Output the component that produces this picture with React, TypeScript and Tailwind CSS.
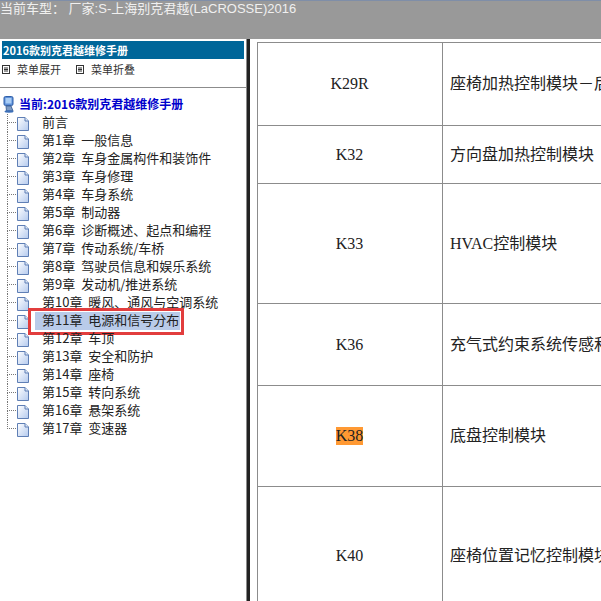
const cjk = { fontFamily: '"Noto Sans CJK SC", sans-serif' };
const mixed = { fontFamily: '"Liberation Sans", "Noto Sans CJK SC", sans-serif' };
const cell = { fontFamily: '"Liberation Serif", "Noto Sans CJK SC", serif' };

const chapters = [
  "前言",
  "第1章 一般信息",
  "第2章 车身金属构件和装饰件",
  "第3章 车身修理",
  "第4章 车身系统",
  "第5章 制动器",
  "第6章 诊断概述、起点和编程",
  "第7章 传动系统/车桥",
  "第8章 驾驶员信息和娱乐系统",
  "第9章 发动机/推进系统",
  "第10章 暖风、通风与空调系统",
  "第11章 电源和信号分布",
  "第12章 车顶",
  "第13章 安全和防护",
  "第14章 座椅",
  "第15章 转向系统",
  "第16章 悬架系统",
  "第17章 变速器",
];

const rows = [
  { code: "K29R", name: "座椅加热控制模块－后", h: "h-[83px]" },
  { code: "K32", name: "方向盘加热控制模块", h: "h-[58px]" },
  { code: "K33", name: "HVAC控制模块", h: "h-[120px]" },
  { code: "K36", name: "充气式约束系统传感和诊断模块", h: "h-[82px]" },
  { code: "K38", name: "底盘控制模块", h: "h-[101px]", hit: true },
  { code: "K40", name: "座椅位置记忆控制模块", h: "h-[138px]" },
];

const DocIcon = () => (
  <svg width="14" height="18" viewBox="0 0 14 18" className="shrink-0">
    <defs>
      <linearGradient id="doc" x1="0" y1="0" x2="1" y2="1">
        <stop offset="0" stopColor="#ffffff" />
        <stop offset="1" stopColor="#b4caee" />
      </linearGradient>
    </defs>
    <path d="M1.5 3.5H9L12.5 7V16.5H1.5Z" fill="url(#doc)" stroke="#5f7fb5" />
    <path d="M9 3.5V7H12.5" fill="#dfe9f8" stroke="#5f7fb5" />
  </svg>
);

const ComputerIcon = () => (
  <svg width="13" height="17" viewBox="0 0 13 17" className="shrink-0">
    <rect x="2" y="0.5" width="9" height="9" rx="1.5" fill="#5d8fd8" stroke="#2f5fa8" />
    <rect x="3.5" y="2" width="6" height="5.5" fill="#a9cdf5" />
    <path d="M4 10H9L11 15H4.5Z" fill="#7f9cc4" stroke="#47699c" />
    <ellipse cx="7" cy="15.5" rx="4.5" ry="1.2" fill="#3c6fb8" />
  </svg>
);

const MenuIcon = () => (
  <svg width="8" height="9" viewBox="0 0 8 9" className="shrink-0">
    <rect x="0.5" y="0.5" width="7" height="8" fill="#fff" stroke="#333" />
    <path d="M2 3H6M2 4.5H6M2 6H6" stroke="#333" />
  </svg>
);

export default function App() {
  return (
    <div className="w-[601px] h-[601px] overflow-hidden bg-white flex flex-col">
      <div
        className="h-[39px] shrink-0 bg-[#999999] border-t border-[#7f8ea8] text-[13px] leading-[16px] text-[#f0f0f0] whitespace-pre"
        style={mixed}
      >
        当前车型： 厂家:S-上海别克君越(LaCROSSE)2016
      </div>

      <div className="flex flex-1 min-h-0">
        <div className="w-[246px] shrink-0 flex flex-col">
          <div className="h-[49px] shrink-0 border-b border-[#8c8c8c] pt-[2px]">
            <div
              className="mx-[2px] h-[18px] bg-[#006699] text-white text-[11px] font-bold leading-[18px] pl-[1px]"
              style={cjk}
            >
              2016款别克君越维修手册
            </div>
            <div className="flex items-center h-[20px] pl-[2px] text-[11px] text-[#333]" style={cjk}>
              <MenuIcon />
              <span className="ml-[7px] w-[59px]">菜单展开</span>
              <MenuIcon />
              <span className="ml-[7px]">菜单折叠</span>
            </div>
          </div>

          <div className="flex items-center h-[20px] pl-[2px] mt-[6px] gap-[4px] shrink-0">
            <ComputerIcon />
            <span className="text-[12px] font-bold text-[#0000cc]" style={cjk}>
              当前:2016款别克君越维修手册
            </span>
          </div>

          <ul>
            {chapters.map((title, i) => {
              const selected = title.startsWith("第11章");
              const last = i === chapters.length - 1;
              return (
                <li
                  key={title}
                  className="relative flex items-center h-[18px] pl-[7px] text-[13px] text-[#222] [word-spacing:3px]"
                  style={cjk}
                >
                  {selected && (
                    <div className="absolute left-[28px] top-[-4px] w-[156px] h-[27px] border-[3px] border-[#e23d3d] bg-white" />
                  )}
                  <div className="w-[9px] h-full flex flex-col shrink-0">
                    <div className="h-[9px] border-l border-b border-dotted border-[#777]" />
                    {!last && <div className="h-[9px] border-l border-dotted border-[#777]" />}
                  </div>
                  <DocIcon />
                  <span
                    className={
                      selected
                        ? "relative ml-[5px] pl-[7px] pr-[1px] h-[18px] leading-[16px] bg-[#b9cbe9] whitespace-nowrap"
                        : "ml-[12px] h-[18px] leading-[16px] whitespace-nowrap"
                    }
                  >
                    {title}
                  </span>
                </li>
              );
            })}
          </ul>
        </div>

        <div className="w-[1px] shrink-0 bg-[#8c8c8c]" />
        <div className="w-[3px] shrink-0 bg-[#222222]" />

        <div className="flex-1 min-w-0 overflow-hidden pl-[7px] pt-[3px]">
          <div className="w-[500px] border-t border-[#8c8c8c]">
            {rows.map((row) => (
              <div key={row.code} className={`flex ${row.h} border-b border-[#8c8c8c] text-[16px] text-[#222]`} style={cell}>
                <div className="w-[186px] shrink-0 flex items-center justify-center border-l border-r border-[#8c8c8c] pr-[1px]">
                  <span className={row.hit ? "bg-[#ff9933] leading-[18px]" : ""}>{row.code}</span>
                </div>
                <div className="flex-1 flex items-center pl-[7px] whitespace-nowrap">{row.name}</div>
              </div>
            ))}
          </div>
        </div>
      </div>
    </div>
  );
}
